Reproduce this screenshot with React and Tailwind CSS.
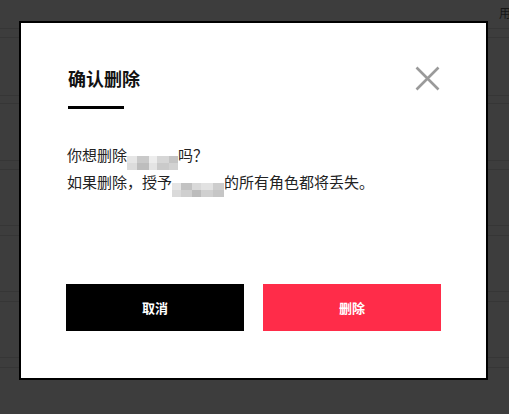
import React from "react";

const Mosaic = ({ cells }) => (
  <span className="inline-flex h-[14px] align-[-2px]">
    {cells.map(([w, c], i) => (
      <span key={i} className="flex flex-col h-full" style={{ width: w }}>
        <span className="flex-1" style={{ background: c[0] }} />
        <span className="flex-1" style={{ background: c[1] }} />
      </span>
    ))}
  </span>
);

const rows = [
  "h-[29px]",
  "h-[9px]",
  "h-[58px]",
  "h-[8px]",
  "h-[57px]",
  "h-[9px]",
  "h-[56px]",
  "h-[10px]",
  "h-[56px]",
  "h-[10px]",
  "h-[56px]",
  "h-[10px]",
];

const App = () => {
  return (
    <div className="relative w-[509px] h-[414px] overflow-hidden bg-[#3d3d3d] font-['Noto_Sans_CJK_SC','Noto_Sans',sans-serif]">
      {/* table behind the overlay */}
      <div className="flex flex-col">
        {rows.map((h, i) => (
          <div key={i} className={`${h} border-b border-[#363636] relative`}>
            {i === 0 && (
              <span className="absolute left-[499px] top-[5px] text-[12px] leading-[16px] text-[#161616] whitespace-nowrap">
                用户
              </span>
            )}
          </div>
        ))}
      </div>

      {/* dialog */}
      <div className="absolute left-[19px] top-[21px] w-[469px] h-[359px] bg-white border-2 border-black flex flex-col px-[45px] pt-[42px] pb-[47px]">
        <div className="flex items-center justify-between">
          <h2 className="pl-[2px] text-[18px] leading-[26px] font-bold text-[#111]">确认删除</h2>
          <svg width="25" height="25" viewBox="0 0 25 25" className="mr-[1px]">
            <path d="M1.5 1.5 L23.5 23.5 M23.5 1.5 L1.5 23.5" stroke="#9a9a9a" strokeWidth="2.6" />
          </svg>
        </div>
        <div className="mt-[15px] ml-[2px] w-[56px] h-[3px] bg-black" />

        <div className="mt-[34px] pl-[1px] text-[15px] leading-[24px] text-[#222]">
          <p>
            你想删除
            <Mosaic
              cells={[
                ["10px", ["#e6e6e6", "#dcdcdc"]],
                ["12px", ["#c9c9c9", "#bdbdbd"]],
                ["8px", ["#ededed", "#e4e4e4"]],
                ["12px", ["#d6d6d6", "#cacaca"]],
                ["9px", ["#c4c4c4", "#d2d2d2"]],
              ]}
            />
            吗？
          </p>
          <p>
            如果删除，授予
            <Mosaic
              cells={[
                ["9px", ["#e4e4e4", "#dadada"]],
                ["11px", ["#c2c2c2", "#cfcfcf"]],
                ["9px", ["#d9d9d9", "#bcbcbc"]],
                ["12px", ["#e2e2e2", "#d0d0d0"]],
                ["11px", ["#cdcdcd", "#c6c6c6"]],
              ]}
            />
            的所有角色都将丢失。
          </p>
        </div>

        <div className="mt-auto flex gap-[19px]">
          <button className="w-[178px] h-[47px] bg-black text-white text-[13px] font-bold">取消</button>
          <button className="w-[178px] h-[47px] bg-[#ff2c49] text-white text-[13px] font-bold">删除</button>
        </div>
      </div>
    </div>
  );
};

export default App;
